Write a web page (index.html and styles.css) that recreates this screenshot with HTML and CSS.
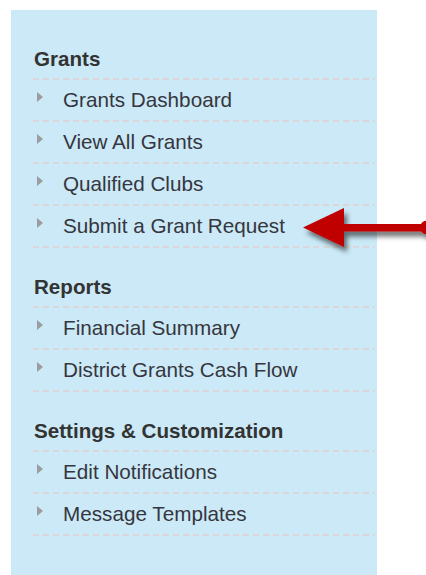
FILE: index.html
```html
<!DOCTYPE html>
<html lang="en">
<head>
<meta charset="utf-8">
<title>Grants Menu</title>
<link rel="stylesheet" href="styles.css">
</head>
<body>
<nav class="sidebar">
  <section class="group">
    <h3 class="group-title">Grants</h3>
    <ul class="links">
      <li><a href="#">Grants Dashboard</a></li>
      <li><a href="#">View All Grants</a></li>
      <li><a href="#">Qualified Clubs</a></li>
      <li><a href="#">Submit a Grant Request</a></li>
    </ul>
  </section>
  <section class="group">
    <h3 class="group-title">Reports</h3>
    <ul class="links">
      <li><a href="#">Financial Summary</a></li>
      <li><a href="#">District Grants Cash Flow</a></li>
    </ul>
  </section>
  <section class="group">
    <h3 class="group-title">Settings &amp; Customization</h3>
    <ul class="links">
      <li><a href="#">Edit Notifications</a></li>
      <li><a href="#">Message Templates</a></li>
    </ul>
  </section>
</nav>

<!-- callout pointing at the "Submit a Grant Request" link -->
<svg class="callout-arrow" width="130" height="60" viewBox="0 0 130 60">
  <defs>
    <filter id="arrow-shadow" x="-20%" y="-30%" width="140%" height="170%">
      <feDropShadow dx="3" dy="5" stdDeviation="2.5" flood-color="#000" flood-opacity="0.55"/>
    </filter>
  </defs>
  <g fill="#c00000" filter="url(#arrow-shadow)">
    <rect x="44" y="24" width="90" height="7.5"/>
    <circle cx="131" cy="27.5" r="7"/>
    <polygon points="7,27.5 48,8 48,47"/>
  </g>
</svg>
</body>
</html>
```
FILE: styles.css
```css
html, body {
  margin: 0;
  padding: 0;
  background: #ffffff;
}

body {
  position: relative;
  width: 426px;
  height: 575px;
  overflow: hidden;
  font-family: "Liberation Sans", Arial, sans-serif;
  font-size: 20.7px;
  color: #363640;
}

.sidebar {
  margin: 10px 0 0 11px;
  width: 342px;
  min-height: 536px;
  padding: 29px 2px 0 22px;
  background: #cbe9f6;
}

.group + .group {
  margin-top: 19px;
}

.group-title,
.links li {
  background-image: repeating-linear-gradient(to right, #dcd6d8 0 6px, transparent 6px 10px);
  background-repeat: no-repeat;
  background-position: left bottom;
  background-size: 100% 2px;
}

.group-title {
  margin: 0;
  height: 41px;
  padding-left: 1px;
  display: flex;
  align-items: center;
  font-size: 20.6px;
  font-weight: bold;
  color: #333333;
  box-sizing: border-box;
  padding-bottom: 2px;
}

.links {
  list-style: none;
  margin: 0;
  padding: 0;
}

.links li {
  height: 42px;
  box-sizing: border-box;
  padding-bottom: 2px;
  display: flex;
  align-items: center;
}

.links a {
  display: flex;
  align-items: center;
  color: #363640;
  text-decoration: none;
}

/* small grey caret before each link */
.links a::before {
  content: "";
  width: 0;
  height: 0;
  margin: -6px 20px 0 4px;
  border-top: 5px solid transparent;
  border-bottom: 5px solid transparent;
  border-left: 6px solid #9c9ca0;
}

.callout-arrow {
  position: absolute;
  left: 296px;
  top: 200px;
  overflow: visible;
}
```
